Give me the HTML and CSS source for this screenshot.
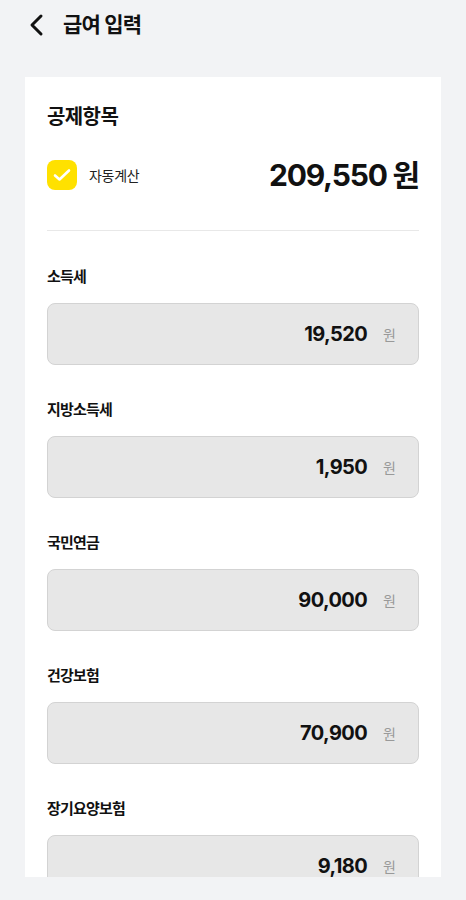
FILE: index.html
```html
<!DOCTYPE html>
<html lang="ko">
<head>
<meta charset="utf-8">
<link rel="stylesheet" href="styles.css">
</head>
<body>
<header class="header">
  <button class="back" aria-label="뒤로">
    <svg width="18" height="24" viewBox="0 0 18 24"><path d="M14 3 L5 12 L14 21" fill="none" stroke="#111" stroke-width="3" stroke-linecap="round" stroke-linejoin="round"/></svg>
  </button>
  <h1 class="title">급여 입력</h1>
</header>
<main class="scroll">
  <section class="card">
    <h2 class="card-title">공제항목</h2>
    <div class="auto-row">
      <label class="auto">
        <span class="check">
          <svg width="18" height="14" viewBox="0 0 18 14"><path d="M2 7.5 L6.5 11.5 L16 2.5" fill="none" stroke="#fff" stroke-width="2.6" stroke-linecap="round" stroke-linejoin="round"/></svg>
        </span>
        <span class="auto-text">자동계산</span>
      </label>
      <div class="total">209,550 <span class="won">원</span></div>
    </div>
    <hr class="divider">
    <div class="field">
      <div class="label">소득세</div>
      <div class="input"><span class="value">19,520</span><span class="unit">원</span></div>
    </div>
    <div class="field">
      <div class="label">지방소득세</div>
      <div class="input"><span class="value">1,950</span><span class="unit">원</span></div>
    </div>
    <div class="field">
      <div class="label">국민연금</div>
      <div class="input"><span class="value">90,000</span><span class="unit">원</span></div>
    </div>
    <div class="field">
      <div class="label">건강보험</div>
      <div class="input"><span class="value">70,900</span><span class="unit">원</span></div>
    </div>
    <div class="field">
      <div class="label">장기요양보험</div>
      <div class="input"><span class="value">9,180</span><span class="unit">원</span></div>
    </div>
  </section>
</main>
</body>
</html>
```
FILE: styles.css
```css
* { box-sizing: border-box; }
html, body { margin: 0; padding: 0; }
body {
  width: 466px;
  height: 900px;
  overflow: hidden;
  background: #f2f3f5;
  font-family: "Inter", "Noto Sans CJK KR", sans-serif;
  color: #111;
}
.header {
  height: 50px;
  display: flex;
  align-items: center;
  padding-left: 27px;
}
.back {
  border: 0;
  background: none;
  padding: 0;
  width: 22px;
  height: 24px;
  display: flex;
  align-items: center;
  margin-right: 14px;
}
.title {
  margin: 0;
  font-size: 21px;
  font-weight: 700;
  letter-spacing: -0.8px;
  line-height: 26px;
}
.scroll {
  margin: 27px 25px 0;
  height: 800px;
  overflow: hidden;
}
.card {
  background: #fff;
  padding: 28px 22px 0;
  height: 800px;
}
.card-title {
  margin: 0;
  font-size: 20px;
  font-weight: 700;
  letter-spacing: -0.6px;
  line-height: 24px;
}
.auto-row {
  margin-top: 31px;
  height: 30px;
  display: flex;
  align-items: center;
  justify-content: space-between;
}
.auto {
  display: flex;
  align-items: center;
}
.check {
  width: 30px;
  height: 30px;
  border-radius: 8px;
  background: #ffe100;
  display: flex;
  align-items: center;
  justify-content: center;
}
.auto-text {
  margin-left: 12px;
  font-size: 14px;
  color: #222;
  letter-spacing: -0.3px;
}
.total {
  font-size: 30px;
  font-weight: 700;
  letter-spacing: -1.2px;
  line-height: 30px;
}
.divider {
  margin: 40px 0 0;
  border: 0;
  height: 1px;
  background: #e8e8e8;
}
.field { margin-top: 36px; }
.field + .field { margin-top: 35px; }
.label {
  font-size: 15px;
  font-weight: 700;
  letter-spacing: -0.8px;
  line-height: 20px;
}
.input {
  margin-top: 16px;
  height: 62px;
  background: #e7e7e7;
  border: 1px solid #d3d3d3;
  border-radius: 8px;
  display: flex;
  align-items: center;
  justify-content: flex-end;
  padding-right: 22px;
}
.value {
  font-size: 20px;
  font-weight: 700;
  letter-spacing: -0.6px;
}
.unit {
  margin-left: 16px;
  font-size: 14px;
  color: #999;
}
```
